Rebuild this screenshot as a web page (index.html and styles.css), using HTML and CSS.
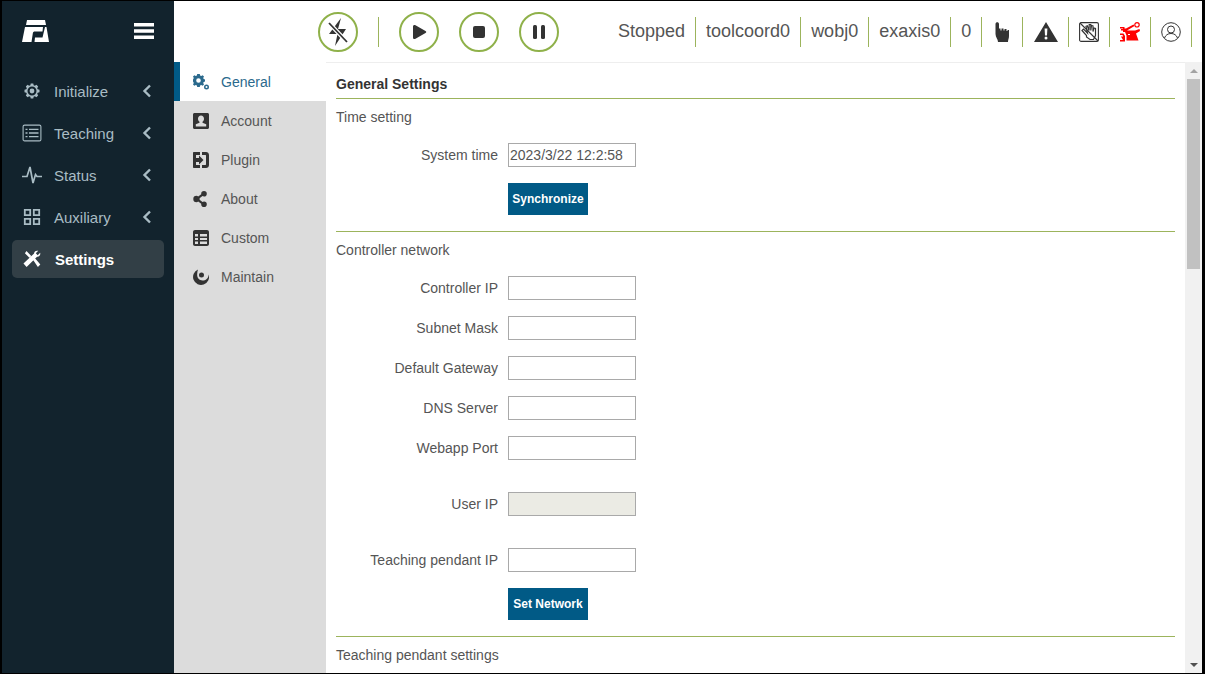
FILE: index.html
```html
<!DOCTYPE html>
<html>

<head>
    <meta charset="utf-8">
    <title>Settings</title>
    <link rel="stylesheet" href="styles.css">
</head>

<body>
    <div class="app">
        <aside class="sidebar">
            <div class="brand">
                <svg class="logo" viewBox="0 0 27 22"><path d="M5 0H23L24 5H4Z"/><path d="M3 7H21L20.500 11.500H13C11.500 11.500 11 12 10.800 13.500L9.500 22H0Z"/><path d="M23 7H24.500L27 22H12.500L13 17.500H20.500Z"/></svg>
                <svg class="burger" viewBox="0 0 20 16"><path d="M0 0H20V3.400H0ZM0 6.300H20V9.700H0ZM0 12.600H20V16H0Z"/></svg>
            </div>
            <nav class="menu">
                <a class="menu-item">
                    <svg class="menu-icon" viewBox="-2 -2 24 24"><path fill-rule="evenodd" d="M8.300 0h3.400l.5 2.400 1.600.7 2.100-1.300 2.300 2.300-1.300 2.100.7 1.600 2.400.5v3.400l-2.400.5-.7 1.600 1.300 2.100-2.300 2.300-2.100-1.300-1.600.7-.5 2.400H8.300l-.5-2.400-1.600-.7-2.100 1.300-2.300-2.300 1.300-2.100-.7-1.600L0 11.700V8.300l2.400-.5.7-1.600-1.300-2.100 2.300-2.300 2.100 1.300 1.600-.7ZM10 4a6 6 0 1 0 0 12a6 6 0 0 0 0-12Zm0 2.800a3.200 3.200 0 1 1 0 6.400a3.200 3.200 0 0 1 0-6.400Z"/></svg>
                    <span>Initialize</span>
                    <svg class="chevron" viewBox="0 0 10 14"><path d="M8 1.500L2.500 7L8 12.500"/></svg>
                </a>
                <a class="menu-item">
                    <svg class="menu-icon" viewBox="0 0 19 18"><rect x=".6" y="1.100" width="17.800" height="15.800" rx="1.500" fill="none" stroke="currentColor" stroke-width="1.100"/><path d="M3 4.700h2v1.400H3zM6.500 4.700h9.500v1.400H6.500zM3 8.300h2v1.400H3zM6.500 8.300h9.500v1.400H6.500zM3 11.900h2v1.400H3zM6.500 11.900h9.500v1.400H6.500z"/></svg>
                    <span>Teaching</span>
                    <svg class="chevron" viewBox="0 0 10 14"><path d="M8 1.500L2.500 7L8 12.500"/></svg>
                </a>
                <a class="menu-item">
                    <svg class="menu-icon" viewBox="0 0 20 18"><path d="M0 10.500H5L8 1L11 17L13.500 8.500L15 10.500H20" fill="none" stroke="currentColor" stroke-width="1.700"/></svg>
                    <span>Status</span>
                    <svg class="chevron" viewBox="0 0 10 14"><path d="M8 1.500L2.500 7L8 12.500"/></svg>
                </a>
                <a class="menu-item">
                    <svg class="menu-icon" viewBox="-1 -1 20 20"><path fill="none" stroke="currentColor" stroke-width="2" d="M1 1h6v6H1zM11 1h6v6h-6zM1 11h6v6H1zM11 11h6v6h-6z"/></svg>
                    <span>Auxiliary</span>
                    <svg class="chevron" viewBox="0 0 10 14"><path d="M8 1.500L2.500 7L8 12.500"/></svg>
                </a>
                <a class="menu-item active">
                    <svg class="menu-icon" viewBox="-.5 -.5 19 19"><path d="M3.200 .5L8.200 5.800L6.200 7.800L1.500 2.800ZM0 13.800L11.200 3.200C11 1.400 13.200-.4 15.600 .4L13 2.800L15 5L17.600 2.400C18.400 5 16 7.200 14.300 6.600L3.300 17.400ZM10.400 10.400L12.400 8.600L17.800 14.800L15.200 17.400Z"/></svg>
                    <span>Settings</span>
                </a>
            </nav>
        </aside>

        <div class="main">
            <header class="topbar">
                <div class="controls">
                    <button class="round-btn"><svg viewBox="0 0 24 30"><path d="M15 1L12 12H20L9 29L11.500 17H3Z"/><path d="M3 6L21 25" stroke="#fff" stroke-width="4"/><path d="M3 6L21 25" stroke="#333" stroke-width="1.800"/></svg></button>
                    <span class="control-sep"></span>
                    <button class="round-btn"><svg viewBox="0 0 24 30"><path d="M6 9.500C6 8 7.300 7.500 8.500 8.200L18.500 14C19.500 14.600 19.500 15.400 18.500 16L8.500 21.800C7.300 22.500 6 22 6 20.500Z"/></svg></button>
                    <button class="round-btn"><svg viewBox="0 0 24 30"><rect x="6" y="9" width="12" height="12" rx="2"/></svg></button>
                    <button class="round-btn"><svg viewBox="0 0 24 30"><rect x="6" y="8" width="4" height="14" rx="1.500"/><rect x="14" y="8" width="4" height="14" rx="1.500"/></svg></button>
                </div>
                <div class="status">
                    <span class="status-cell">Stopped</span>
                    <span class="status-cell">toolcoord0</span>
                    <span class="status-cell">wobj0</span>
                    <span class="status-cell">exaxis0</span>
                    <span class="status-cell">0</span>
                    <span class="status-cell icon-cell"><svg width="14" height="20" viewBox="0 0 14 20"><path fill="#333" d="M.5 2C.5-.3 4-.3 4 2V6.500H5.500V8.500H6.500V6.500H8.500V8.500H9.500V7H11.500V9H12.500V8H14V14C14 16.500 13 17.500 13 20H3C3 17 .5 15.500 .5 12Z"/></svg></span>
                    <span class="status-cell icon-cell wide"><svg width="24" height="20" viewBox="0 0 24 20"><path fill="#333" fill-rule="evenodd" d="M12 0L24 20H0ZM10.600 6.500L11 13.500H13L13.400 6.500ZM12 14.500A1.500 1.500 0 1 0 12 17.500A1.500 1.500 0 0 0 12 14.500Z"/></svg></span>
                    <span class="status-cell icon-cell"><svg width="20" height="20" viewBox="0 0 20 20"><rect x=".6" y=".6" width="18.800" height="18.800" rx="1.500" fill="none" stroke="#333" stroke-width="1.100"/><path fill="none" stroke="#333" stroke-width="1.200" d="M3 8.500L7.500 13.500V15L11 17.500H14.500L16.500 13.500V6.500L15 6L14 9.500V4L12.500 3.500L11.800 8.500V2.500H10.200L10 8.500L8.300 3.800L7 4.300L8.500 11L4.500 7Z"/><path fill="none" stroke="#333" stroke-width="1.100" d="M1 1L19 19"/></svg></span>
                    <span class="status-cell icon-cell"><svg width="20" height="20" viewBox="0 0 20 20"><path fill="#f00" d="M0 5H4.500V6.500H6L13.500 2.500L14.500 4L7 8.500H15L19.500 7L20 9L16 11.500L18.500 18.500H6.500V13.500L5 10H3V8.500H1V7H3V6.500H0ZM0 11.500H3.500L5 14V19.500H0V18H3L1 14.500H3.200L2.500 13H0Z"/><path fill="#fff" d="M8 12H10V13H8Z"/><circle cx="17" cy="2.800" r="2.200" fill="#fff" stroke="#f00" stroke-width="1.200"/></svg></span>
                    <span class="status-cell icon-cell"><svg width="20" height="20" viewBox="0 0 20 20" fill="none" stroke="#333" stroke-width="1"><circle cx="10" cy="10" r="9.300"/><circle cx="10" cy="7.500" r="3.500"/><path d="M3.500 16C4.500 13 7 11.500 10 11.500S15.500 13 16.500 16"/></svg></span>
                </div>
            </header>

            <div class="workspace">
                <nav class="subnav">
                    <a class="subnav-item current">
                        <svg class="subnav-icon" viewBox="0 0 16 16"><path fill-rule="evenodd" d="M4.200 0H6.800L7.100 1.500L8.300 2L9.600 1.200L11 2.600L10.200 3.900L10.700 5.100L12 5.400V7.600L10.700 7.900L10.200 9.100L11 10.400L9.600 11.800L8.300 11L7.100 11.500L6.800 13H4.200L3.900 11.500L2.700 11L1.400 11.800L0 10.400L.8 9.100L.3 7.900L0 7.600V5.400L.3 5.100L.8 3.900L0 2.600L1.400 1.200L2.700 2L3.900 1.500ZM5.500 4.200A2.300 2.300 0 1 0 5.500 8.800A2.300 2.300 0 0 0 5.500 4.200Z"/><path fill-rule="evenodd" d="M13.500 10.500A2.500 2.500 0 1 0 13.500 15.500A2.500 2.500 0 0 0 13.500 10.500ZM13.500 12A1 1 0 1 1 13.500 14A1 1 0 0 1 13.500 12Z"/></svg>
                        <span>General</span>
                    </a>
                    <a class="subnav-item">
                        <svg class="subnav-icon" viewBox="0 0 16 16"><path fill-rule="evenodd" d="M1.500 0H14.500C15.300 0 16 .7 16 1.500V14.500C16 15.300 15.300 16 14.500 16H1.500C.7 16 0 15.300 0 14.500V1.500C0 .7 .7 0 1.500 0ZM8 2.500C6.200 2.500 5 3.900 5 5.700C5 7 5.600 8.100 6.500 8.700V9.700L2.800 11.300V13.500H13.200V11.300L9.500 9.700V8.700C10.400 8.100 11 7 11 5.700C11 3.900 9.800 2.500 8 2.500Z"/></svg>
                        <span>Account</span>
                    </a>
                    <a class="subnav-item">
                        <svg class="subnav-icon" viewBox="0 0 16 16"><path d="M1 0H7V3H3V6H6V3.500L10.500 8L6 12.500V10H3V13H7V16H1C.4 16 0 15.600 0 15V1C0 .4 .4 0 1 0ZM9 0H13C14.700 0 16 1.300 16 3V13C16 14.700 14.700 16 13 16H9V13H12.500C12.800 13 13 12.800 13 12.500V3.500C13 3.200 12.800 3 12.500 3H9Z"/></svg>
                        <span>Plugin</span>
                    </a>
                    <a class="subnav-item">
                        <svg class="subnav-icon" viewBox="0 0 16 16"><path d="M11 0A2.800 2.800 0 1 1 11 5.600C10.400 5.600 9.900 5.400 9.500 5.100L6.600 7.200C6.700 7.700 6.700 8.300 6.600 8.800L9.500 10.900C9.900 10.600 10.400 10.400 11 10.400A2.800 2.800 0 1 1 8.200 13.200V12.800L5.200 10.600C4.700 11 4.100 11.200 3.500 11.200A3.200 3.200 0 0 1 3.500 4.800C4.100 4.800 4.700 5 5.200 5.400L8.200 3.200V2.800A2.800 2.800 0 0 1 11 0Z"/></svg>
                        <span>About</span>
                    </a>
                    <a class="subnav-item">
                        <svg class="subnav-icon" viewBox="0 0 16 16"><path fill-rule="evenodd" d="M2 0H14C15.100 0 16 .9 16 2V14C16 15.100 15.100 16 14 16H2C.9 16 0 15.100 0 14V2C0 .9 .9 0 2 0ZM2 4V6.500H5V4ZM7 4V6.500H14V4ZM2 8V10H5V8ZM7 8V10H14V8ZM2 11.500V14H5V11.500ZM7 11.500V14H14V11.500Z"/></svg>
                        <span>Custom</span>
                    </a>
                    <a class="subnav-item">
                        <svg class="subnav-icon" viewBox="0 0 16 16"><path fill-rule="evenodd" d="M5 .5A8 8 0 1 0 15.700 5.500C15.400 9.500 12.700 11.500 9.500 11.500C6 11.500 3.800 8.500 4.200 5C4.300 3.300 4.500 1.800 5 .5ZM8.500 3.500A2.500 2.500 0 1 0 8.500 8.500A2.500 2.500 0 0 0 8.500 3.500Z"/></svg>
                        <span>Maintain</span>
                    </a>
                </nav>

                <main class="content">
                    <h1 class="page-title">General Settings</h1>

                    <section class="group">
                        <h2 class="group-title">Time setting</h2>
                        <div class="field">
                            <label>System time</label>
                            <input type="text" value="2023/3/22 12:2:58">
                        </div>
                        <div class="field-actions">
                            <button class="action-btn">Synchronize</button>
                        </div>
                    </section>

                    <section class="group">
                        <h2 class="group-title">Controller network</h2>
                        <div class="field">
                            <label>Controller IP</label>
                            <input type="text">
                        </div>
                        <div class="field">
                            <label>Subnet Mask</label>
                            <input type="text">
                        </div>
                        <div class="field">
                            <label>Default Gateway</label>
                            <input type="text">
                        </div>
                        <div class="field">
                            <label>DNS Server</label>
                            <input type="text">
                        </div>
                        <div class="field">
                            <label>Webapp Port</label>
                            <input type="text">
                        </div>
                        <div class="field spaced">
                            <label>User IP</label>
                            <input type="text" disabled>
                        </div>
                        <div class="field spaced">
                            <label>Teaching pendant IP</label>
                            <input type="text">
                        </div>
                        <div class="field-actions">
                            <button class="action-btn">Set Network</button>
                        </div>
                    </section>

                    <section class="group">
                        <h2 class="group-title">Teaching pendant settings</h2>
                    </section>
                </main>

                <div class="scrollbar">
                    <span class="arrow up"></span>
                    <div class="track"><div class="thumb"></div></div>
                    <span class="arrow down"></span>
                </div>
            </div>
        </div>
    </div>
</body>

</html>
```

FILE: styles.css
```css
* {
    box-sizing: border-box;
}

html,
body {
    height: 100%;
    margin: 0;
    overflow: hidden;
}

body {
    background: #000;
    padding: 1px 3px 1px 2px;
    font-family: "Liberation Sans", Arial, sans-serif;
    font-size: 14px;
    color: #555;
}

.app {
    display: flex;
    height: 100%;
    background: #fff;
}

/* left menu */
.sidebar {
    width: 172px;
    flex: none;
    background: #12232d;
    color: #a9bcc4;
}

.brand {
    display: flex;
    align-items: center;
    justify-content: space-between;
    height: 61px;
    padding: 0 20px;
}

.logo {
    width: 27px;
    height: 22px;
    margin-top: -2px;
    fill: #fff;
}

.burger {
    width: 20px;
    height: 16px;
    margin-top: -2px;
    fill: #fff;
}

.menu {
    padding: 10px 10px 0;
}

.menu-item {
    display: flex;
    align-items: center;
    height: 38px;
    margin-bottom: 4px;
    padding: 0 10px;
    border-radius: 5px;
    font-size: 15px;
}

.menu-icon {
    width: 20px;
    height: 18px;
    flex: none;
    margin-right: 12px;
    fill: currentColor;
}

.menu-item span {
    flex: 1;
}

.chevron {
    width: 10px;
    height: 14px;
    margin-right: 2px;
    fill: none;
    stroke: currentColor;
    stroke-width: 2.400;
}

.menu-item.active {
    background: #323f46;
    color: #fff;
    font-weight: bold;
}

.menu-item.active span {
    padding-left: 1px;
}

/* top bar */
.main {
    flex: 1;
    min-width: 0;
    display: flex;
    flex-direction: column;
}

.topbar {
    display: flex;
    align-items: center;
    height: 61px;
    flex: none;
    color: #555;
}

.controls {
    display: flex;
    align-items: center;
    gap: 20px;
    margin-left: 144px;
}

.round-btn {
    display: flex;
    align-items: center;
    justify-content: center;
    width: 40px;
    height: 40px;
    padding: 0;
    border: 2px solid #8fb14a;
    border-radius: 50%;
    background: #fff;
}

.round-btn svg {
    width: 24px;
    height: 30px;
    fill: #333;
}

.control-sep {
    width: 1px;
    height: 30px;
    background: #9cb45c;
}

.status {
    display: flex;
    align-items: center;
    margin-left: 49px;
    font-size: 18px;
}

.status-cell {
    display: flex;
    align-items: center;
    justify-content: center;
    height: 30px;
    padding: 0 10px;
    border-right: 1px solid #9cb45c;
}

.status-cell.icon-cell {
    width: 41px;
    padding: 0;
}

.status-cell.wide {
    width: 46px;
}

/* sub menu + form */
.workspace {
    flex: 1;
    min-height: 0;
    display: flex;
}

.subnav {
    width: 152px;
    flex: none;
    background: #dcdcdc;
}

.subnav-item {
    display: flex;
    align-items: center;
    height: 39px;
    padding-left: 19px;
    color: #555;
}

.subnav-item.current {
    background: #fff;
    border-left: 6px solid #015a86;
    padding-left: 13px;
    color: #2b6a8d;
}

.subnav-icon {
    width: 16px;
    height: 16px;
    flex: none;
    margin-right: 12px;
    fill: #333;
}

.current .subnav-icon {
    fill: #2b6a8d;
}

.content {
    flex: 1;
    min-width: 0;
    padding: 0 10px;
    border-top: 1px solid #eee;
    overflow: hidden;
}

.page-title {
    height: 36px;
    margin: 0;
    padding-top: 13px;
    border-bottom: 1px solid #9cb45c;
    font-size: 14px;
    line-height: 16px;
    color: #333;
}

.group {
    padding-bottom: 16px;
    border-bottom: 1px solid #9cb45c;
}

.group:last-child {
    border-bottom: 0;
}

.group-title {
    height: 44px;
    margin: 0;
    padding-top: 10px;
    font-size: 14px;
    line-height: 17px;
    font-weight: normal;
    color: #555;
}

.field {
    display: flex;
    align-items: center;
    height: 24px;
    margin-bottom: 16px;
}

.field.spaced {
    margin-top: 32px;
}

.field label {
    width: 162px;
    margin-right: 10px;
    text-align: right;
}

.field input {
    width: 128px;
    height: 24px;
    padding: 0 1px;
    border: 1px solid #a9a9a9;
    background: #fff;
    font-family: inherit;
    font-size: 14px;
    color: #555;
}

.field input:disabled {
    background: #ebebe4;
}

.field-actions {
    padding-left: 172px;
}

.action-btn {
    display: block;
    width: 80px;
    height: 32px;
    padding: 0;
    border: 0;
    background: #015a86;
    color: #fff;
    font-family: inherit;
    font-size: 12px;
    font-weight: bold;
}

/* fake browser scrollbar */
.scrollbar {
    width: 17px;
    flex: none;
    display: flex;
    flex-direction: column;
    background: #f1f1f1;
}

.arrow {
    height: 17px;
    flex: none;
    display: flex;
    align-items: center;
    justify-content: center;
}

.arrow::before {
    content: "";
    border-left: 4px solid transparent;
    border-right: 4px solid transparent;
}

.arrow.up::before {
    border-bottom: 4px solid #a3a3a3;
}

.arrow.down::before {
    border-top: 4px solid #505050;
}

.track {
    flex: 1;
}

.thumb {
    height: 190px;
    margin: 0 2px;
    background: #c1c1c1;
}
```
